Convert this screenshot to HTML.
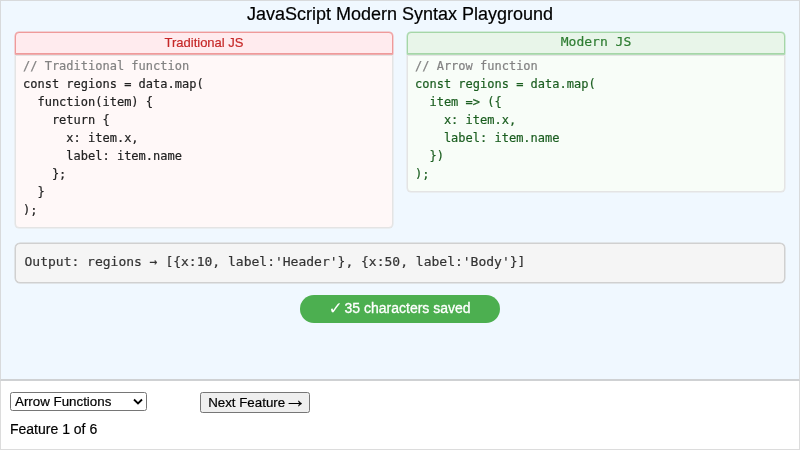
<!DOCTYPE html>
<html><head><meta charset="utf-8">
<style>
*{box-sizing:border-box}
h1,.hdr,.code,#out,#pill,#sel,#btn,#feat{will-change:transform}
html,body{margin:0;padding:0;background:#fff;}
body{width:800px;height:452px;overflow:hidden;font-family:"Liberation Sans",sans-serif;color:#000;position:relative;-webkit-text-stroke:0.2px}
#top{position:absolute;left:0;top:0;width:800px;height:381px;background:#f0f8ff;border:1px solid #d8dadc;border-bottom:2px solid #cfd1d3}
h1{position:absolute;left:0;width:800px;top:4px;margin:0;font-size:18px;font-weight:normal;text-align:center;line-height:21px}
.hdr{position:absolute;height:22px;border-radius:4px 4px 0 0;font-size:13px;line-height:20px;text-align:center}
.code{position:absolute;margin:0;font-family:"DejaVu Sans Mono","Liberation Mono",monospace;font-size:12px;line-height:18px;white-space:pre;padding:1px 7px;-webkit-text-stroke:0.2px;border-radius:0 0 4px 4px}
#lh{left:15px;top:32px;width:378px;background:#ffebee;border:1px solid #ef9a9a;box-shadow:0 0 0 0.5px rgba(239,154,154,.8),0 1px 0 0 rgba(239,154,154,.6);z-index:1;color:#c62828}
#lc{left:15px;top:55px;width:378px;height:173px;box-shadow:0 0 0 0.5px #e4e4e4;background:#fff8f8;border:1px solid #e4e4e4;color:#222}
#rh{left:407px;top:32px;width:378px;background:#e8f5e9;border:1px solid #a5d6a7;box-shadow:0 0 0 0.5px rgba(165,214,167,.8),0 1px 0 0 rgba(165,214,167,.6);z-index:1;color:#2e7d32;font-family:"DejaVu Sans Mono",monospace;line-height:17px}
#rc{left:407px;top:55px;width:378px;height:137px;box-shadow:0 0 0 0.5px #e4e4e4;background:#f8fdf8;border:1px solid #e4e4e4;color:#1b5e20}
.cm{color:#828282}
#out{position:absolute;left:15px;top:243px;width:770px;height:40px;background:#f5f5f5;border:1px solid #d0d0d0;box-shadow:0 0 0 0.5px #d0d0d0;border-radius:5px;font-family:"DejaVu Sans Mono",monospace;font-size:13px;line-height:36px;padding-left:8.5px;color:#333;white-space:pre}
#pill{position:absolute;left:300px;top:295px;width:200px;height:28px;border-radius:14px;background:#4caf50;color:#fff;font-size:14px;line-height:27px;text-align:center;-webkit-text-stroke:0.3px}
#bot{position:absolute;left:0;top:381px;width:800px;height:69px;border:1px solid #dcdcdc;border-top:none;background:#fff}
#sel{position:absolute;left:10px;top:392px;width:137px;height:19px;border:1px solid #767676;border-radius:2.5px;background:#fff;font-size:13.333px;line-height:17px;padding-left:4px}
#btn{position:absolute;left:200px;top:392px;width:110px;height:21px;border:1px solid #767676;border-radius:2.5px;background:#efefef;font-size:13.333px;line-height:19px;text-align:center}
.ar{font-size:22px;line-height:10px;position:relative;top:-0.5px;margin:0 -4.5px 0 -4.5px}
.ck{font-family:"DejaVu Sans",sans-serif;font-size:17px;line-height:10px;font-weight:bold;position:relative;top:1px;left:-1px;margin-right:-3px;-webkit-text-stroke:0}
#feat{position:absolute;left:10px;top:420px;font-size:14px;line-height:18px}
</style></head><body>
<div id="top"></div>
<h1>JavaScript Modern Syntax Playground</h1>
<div class="hdr" id="lh">Traditional JS</div>
<pre class="code" id="lc"><span class="cm">// Traditional function</span>
const regions = data.map(
  function(item) {
    return {
      x: item.x,
      label: item.name
    };
  }
);</pre>
<div class="hdr" id="rh">Modern JS</div>
<pre class="code" id="rc"><span class="cm">// Arrow function</span>
const regions = data.map(
  item =&gt; ({
    x: item.x,
    label: item.name
  })
);</pre>
<div id="out">Output: regions → [{x:10, label:'Header'}, {x:50, label:'Body'}]</div>
<div id="pill"><span class="ck">✓</span> 35 characters saved</div>
<div id="bot"></div>
<div id="sel">Arrow Functions<svg style="position:absolute;right:3px;top:4.5px" width="10" height="8" viewBox="0 0 10 8"><path d="M1 1.5 L5 5.5 L9 1.5" fill="none" stroke="#000" stroke-width="1.8"/></svg></div>
<div id="btn">Next Feature <span class="ar">→</span></div>
<div id="feat">Feature 1 of 6</div>
</body></html>
